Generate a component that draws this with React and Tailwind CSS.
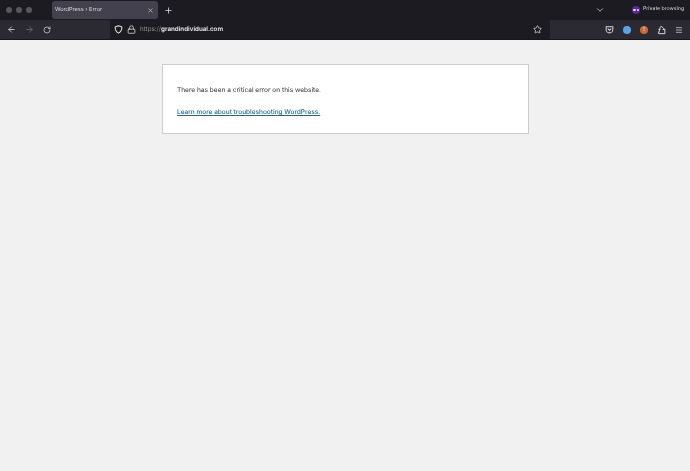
import React from "react";
import { ArrowLeft, ArrowRight, RotateCw, Lock, Star, X, Plus, ChevronDown, Menu } from "lucide-react";

const ShieldIcon = () => (
  <svg viewBox="0 0 16 16" className="w-[9px] h-[9px]" fill="none" stroke="currentColor" strokeWidth="1.8" strokeLinejoin="round">
    <path d="M8 1.5 L14 3.5 C14 9 12 12.5 8 14.5 C4 12.5 2 9 2 3.5 Z" />
  </svg>
);

const PocketIcon = () => (
  <svg viewBox="0 0 16 16" className="w-[9px] h-[9px] text-[#d8d8dc]" fill="none" stroke="currentColor" strokeWidth="1.8" strokeLinecap="round" strokeLinejoin="round">
    <path d="M2 3 H14 V8 C14 11.5 11 14 8 14 C5 14 2 11.5 2 8 Z" />
    <path d="M5.5 7 L8 9.5 L10.5 7" />
  </svg>
);

const ExtensionIcon = () => (
  <svg viewBox="0 0 16 16" className="w-[9px] h-[10px] text-[#e4e4e8]" fill="none" stroke="currentColor" strokeWidth="1.7" strokeLinejoin="round">
    <path d="M3 7 H5.5 C4.8 4 6 1.5 8 1.5 L12 5.5 L10.5 7 H14 V14.5 H3 V11 C5 11.5 5 7.5 3 7 Z" />
  </svg>
);

const App = () => {
  return (
    <div className="w-[690px] h-[471px] overflow-hidden flex flex-col bg-[#f1f1f1] font-['Inter','Liberation_Sans',sans-serif] [text-rendering:geometricPrecision]">
      {/* Tab strip */}
      <div className="h-5 shrink-0 bg-[#1c1b22] flex items-center text-[#e4e4e8]">
        <div className="w-[52px] pl-[6px] flex gap-[4px]">
          <span className="w-[6px] h-[6px] rounded-full bg-[#58575d]" />
          <span className="w-[6px] h-[6px] rounded-full bg-[#58575d]" />
          <span className="w-[6px] h-[6px] rounded-full bg-[#58575d]" />
        </div>
        <div className="w-[106px] h-[18px] rounded-[3px] bg-[#42414d] flex items-center justify-between pl-[3px] pr-[4px]">
          <span className="text-[5.6px] text-[#dcdce0] will-change-transform">WordPress › Error</span>
          <X className="w-[7px] h-[7px] text-[#d8d8dc]" strokeWidth={2} />
        </div>
        <Plus className="w-[9px] h-[9px] ml-[6px] text-[#e4e4e8]" strokeWidth={2} />
        <ChevronDown className="w-[10px] h-[10px] ml-auto mr-[27px] text-[#c8c8cc]" strokeWidth={2} />
        <div className="flex items-center gap-[3px] pr-[6px]">
          <span className="w-[8px] h-[8px] rounded-full bg-[#5b2a9e] flex items-center justify-center gap-[1px]">
            <span className="w-[3px] h-[2px] rounded-full bg-[#e8e0f5]" />
            <span className="w-[2px] h-[2px] rounded-full bg-[#e8e0f5]" />
          </span>
          <span className="text-[5.2px] text-[#dcdce0] will-change-transform">Private browsing</span>
        </div>
      </div>

      {/* Toolbar */}
      <div className="h-5 shrink-0 bg-[#2b2a33] flex items-center text-[#e4e4e8] border-b border-[#17161c]">
        <div className="w-[110px] flex items-center pl-[7px] gap-[9px]">
          <ArrowLeft className="w-[9px] h-[9px]" strokeWidth={2} />
          <ArrowRight className="w-[9px] h-[9px] text-[#77767d]" strokeWidth={2} />
          <RotateCw className="w-[8px] h-[8px]" strokeWidth={2} />
        </div>
        <div className="w-[440px] h-[19px] bg-[#1c1b22] flex items-center pl-[4px] pr-[8px]">
          <ShieldIcon />
          <Lock className="w-[9px] h-[9px] ml-[4px]" strokeWidth={2} />
          <span className="ml-[4px] text-[6.25px] text-[#8f8f96] will-change-transform">
            https://<span className="text-[#ececf0] font-semibold">grandindividual.com</span>
          </span>
          <Star className="w-[9px] h-[9px] ml-auto" strokeWidth={2} />
        </div>
        <div className="flex-1 flex items-center pl-[55px] gap-[9px]">
          <PocketIcon />
          <span className="w-[8px] h-[8px] rounded-full bg-[#5aa5e0]" />
          <span className="w-[8px] h-[8px] rounded-full bg-[#c8693c] flex items-center justify-center text-[6px] leading-none text-white">!</span>
          <ExtensionIcon />
          <Menu className="w-[8px] h-[8px]" strokeWidth={2} />
        </div>
      </div>

      {/* Page */}
      <div className="flex-1 pt-6 flex justify-center">
        <div className="w-[367px] h-[70px] bg-white border border-[#cccccc] pl-[14px] pt-[20px] self-start">
          <p className="text-[6.57px] leading-[10px] text-[#333333] will-change-transform">There has been a critical error on this website.</p>
          <a className="block mt-3 text-[6.5px] leading-[10px] font-medium text-[#22688f] underline will-change-transform">Learn more about troubleshooting WordPress.</a>
        </div>
      </div>
    </div>
  );
};

export default App;
